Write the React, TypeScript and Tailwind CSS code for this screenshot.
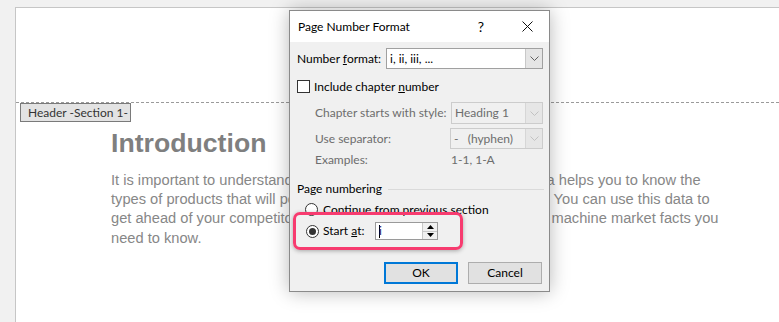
import React from 'react'

const ui = "font-['Segoe_UI',Lato,sans-serif] text-[12px] whitespace-nowrap"

function Chevron({ color }: { color: string }) {
  return (
    <svg width="9" height="5" viewBox="0 0 9 5">
      <path d="M0.5 0.5 L4.5 4.5 L8.5 0.5" fill="none" stroke={color} strokeWidth="1" />
    </svg>
  )
}

function Select({ value, width, height, disabled }: { value: string; width: string; height: string; disabled?: boolean }) {
  return (
    <div
      className={`${width} ${height} flex border ${disabled ? 'border-[#cccccc] bg-[#f0f0f0] text-[#6d6d6d]' : 'border-[#a0a0a0] bg-white text-black'}`}
    >
      <div className="flex-1 flex items-center pl-[3px] whitespace-pre">{value}</div>
      <div className={`w-[17px] flex items-center justify-center border-l ${disabled ? 'border-[#d6d6d6] bg-[#e6e6e6]' : 'border-[#c8c8c8] bg-[#e5e5e5]'}`}>
        <Chevron color={disabled ? '#c2c2c2' : '#606060'} />
      </div>
    </div>
  )
}

function Radio({ checked }: { checked?: boolean }) {
  return (
    <div className="w-[13px] h-[13px] shrink-0 rounded-full border border-[#333] bg-white flex items-center justify-center">
      {checked && <div className="w-[7px] h-[7px] rounded-full bg-[#333]" />}
    </div>
  )
}

function Dialog() {
  return (
    <div className={`absolute left-[289px] top-[10px] w-[261px] h-[282px] border border-[#8a8a8a] bg-[#f0f0f0] shadow-[0_0_18px_rgba(0,0,0,0.28)] flex flex-col ${ui}`}>
      <div className="h-[31px] shrink-0 bg-white flex items-center pl-[8px] pr-[10px]">
        <div className="flex-1 text-black">Page Number Format</div>
        <div className="w-[24px] text-center text-[14px] text-black">?</div>
        <div className="w-[22px]" />
        <div className="w-[24px] flex items-center justify-center">
          <svg width="11" height="11" viewBox="0 0 11 11">
            <path d="M0.5 0.5 L10.5 10.5 M10.5 0.5 L0.5 10.5" stroke="#111" strokeWidth="1" />
          </svg>
        </div>
      </div>

      <div className="flex flex-col pl-[7px] pr-[5px] text-black">
        <div className="mt-[6px] flex items-center">
          <div className="w-[89px]">
            Number <span className="underline">f</span>ormat:
          </div>
          <Select value="i, ii, iii, ..." width="w-[157px]" height="h-[21px]" />
        </div>

        <div className="mt-[11px] h-[13px] flex items-center">
          <div className="w-[13px] h-[13px] border border-[#333] bg-white" />
          <div className="ml-[4px]">
            Include chapter <span className="underline">n</span>umber
          </div>
        </div>

        <div className="mt-[9px] flex items-center pl-[18px] text-[#6d6d6d]">
          <div className="w-[136px]">Chapter starts with style:</div>
          <Select value="Heading 1" width="w-[92px]" height="h-[22px]" disabled />
        </div>

        <div className="mt-[4px] flex items-center pl-[18px] text-[#6d6d6d]">
          <div className="w-[135px]">Use separator:</div>
          <Select value="-   (hyphen)" width="w-[93px]" height="h-[21px]" disabled />
        </div>

        <div className="mt-[3px] h-[16px] flex items-center pl-[18px] text-[#6d6d6d]">
          <div className="w-[136px]">Examples:</div>
          <div>1-1, 1-A</div>
        </div>

        <div className="mt-[13px] h-[16px] flex items-center">
          <div>Page numbering</div>
          <div className="flex-1 h-px bg-[#dadada] ml-[6px]" />
        </div>

        <div className="mt-[5px] h-[15px] flex items-center pl-[8px]">
          <Radio />
          <div className="ml-[5px]">Continue from previous section</div>
        </div>

        <div className="mt-[5px] h-[18px] flex items-center pl-[9px]">
          <Radio checked />
          <div className="ml-[4px] w-[52px]">
            Start <span className="underline">a</span>t:
          </div>
          <div className="w-[63px] h-[18px] flex border border-[#9a9a9a] bg-white">
            <div className="flex-1 flex items-center pl-[3px]">
              <div className="w-px h-[13px] bg-black" />
              <span className="text-[#1a1a6a] -ml-[1px]">i</span>
            </div>
            <div className="w-[15px] flex flex-col border-l border-[#c8c8c8]">
              <div className="flex-1 flex items-center justify-center bg-[#f0f0f0] border-b border-[#c8c8c8]">
                <svg width="7" height="4" viewBox="0 0 7 4"><path d="M0 4 L3.5 0 L7 4 Z" fill="#000" /></svg>
              </div>
              <div className="flex-1 flex items-center justify-center bg-[#f0f0f0]">
                <svg width="7" height="4" viewBox="0 0 7 4"><path d="M0 0 L3.5 4 L7 0 Z" fill="#000" /></svg>
              </div>
            </div>
          </div>
        </div>

        <div className="mt-[22px] flex justify-end gap-[10px] pr-[2px]">
          <div className="w-[74px] h-[22px] border-2 border-[#0078d7] bg-[#e1e1e1] flex items-center justify-center">OK</div>
          <div className="w-[74px] h-[22px] border border-[#adadad] bg-[#e1e1e1] flex items-center justify-center">Cancel</div>
        </div>
      </div>
    </div>
  )
}

export default function App() {
  return (
    <div className="relative w-[779px] h-[322px] overflow-hidden bg-[#f1f1f1] pt-[7px] pl-[15px]">
      <div className="h-[400px] bg-white border-l border-t border-[#c6c6c6]">
        <div className="h-[95px] border-b border-dashed border-[#9a9a9a]" />
        <div className={`ml-[4px] w-[111px] h-[19px] border border-[#7a7a7a] bg-[#e3e3e3] text-[#333] flex items-center pl-[7px] ${ui}`}>
          Header -Section 1-
        </div>
        <div className="pl-[95px] font-['Liberation_Sans',Arial,sans-serif]">
          <h1 className="mt-[8px] text-[26.67px] leading-[26.67px] font-bold text-[#7f7f7f]">Introduction</h1>
          <div className="mt-[14px] text-[14.67px] leading-[19.33px] text-[#878787] whitespace-nowrap">
            <div>It is important to understand the coffee machine market. Market data helps you to know the</div>
            <div>types of products that will perform well in the coffee machine sector. You can use this data to</div>
            <div>get ahead of your competitors by learning about all the latest coffee machine market facts you</div>
            <div>need to know.</div>
          </div>
        </div>
      </div>

      <Dialog />

      <div className="absolute left-[293px] top-[212px] w-[170px] h-[38px] border-[3px] border-[#f73b6f] rounded-[7px] shadow-[0_1px_4px_rgba(0,0,0,0.3)]" />
    </div>
  )
}
